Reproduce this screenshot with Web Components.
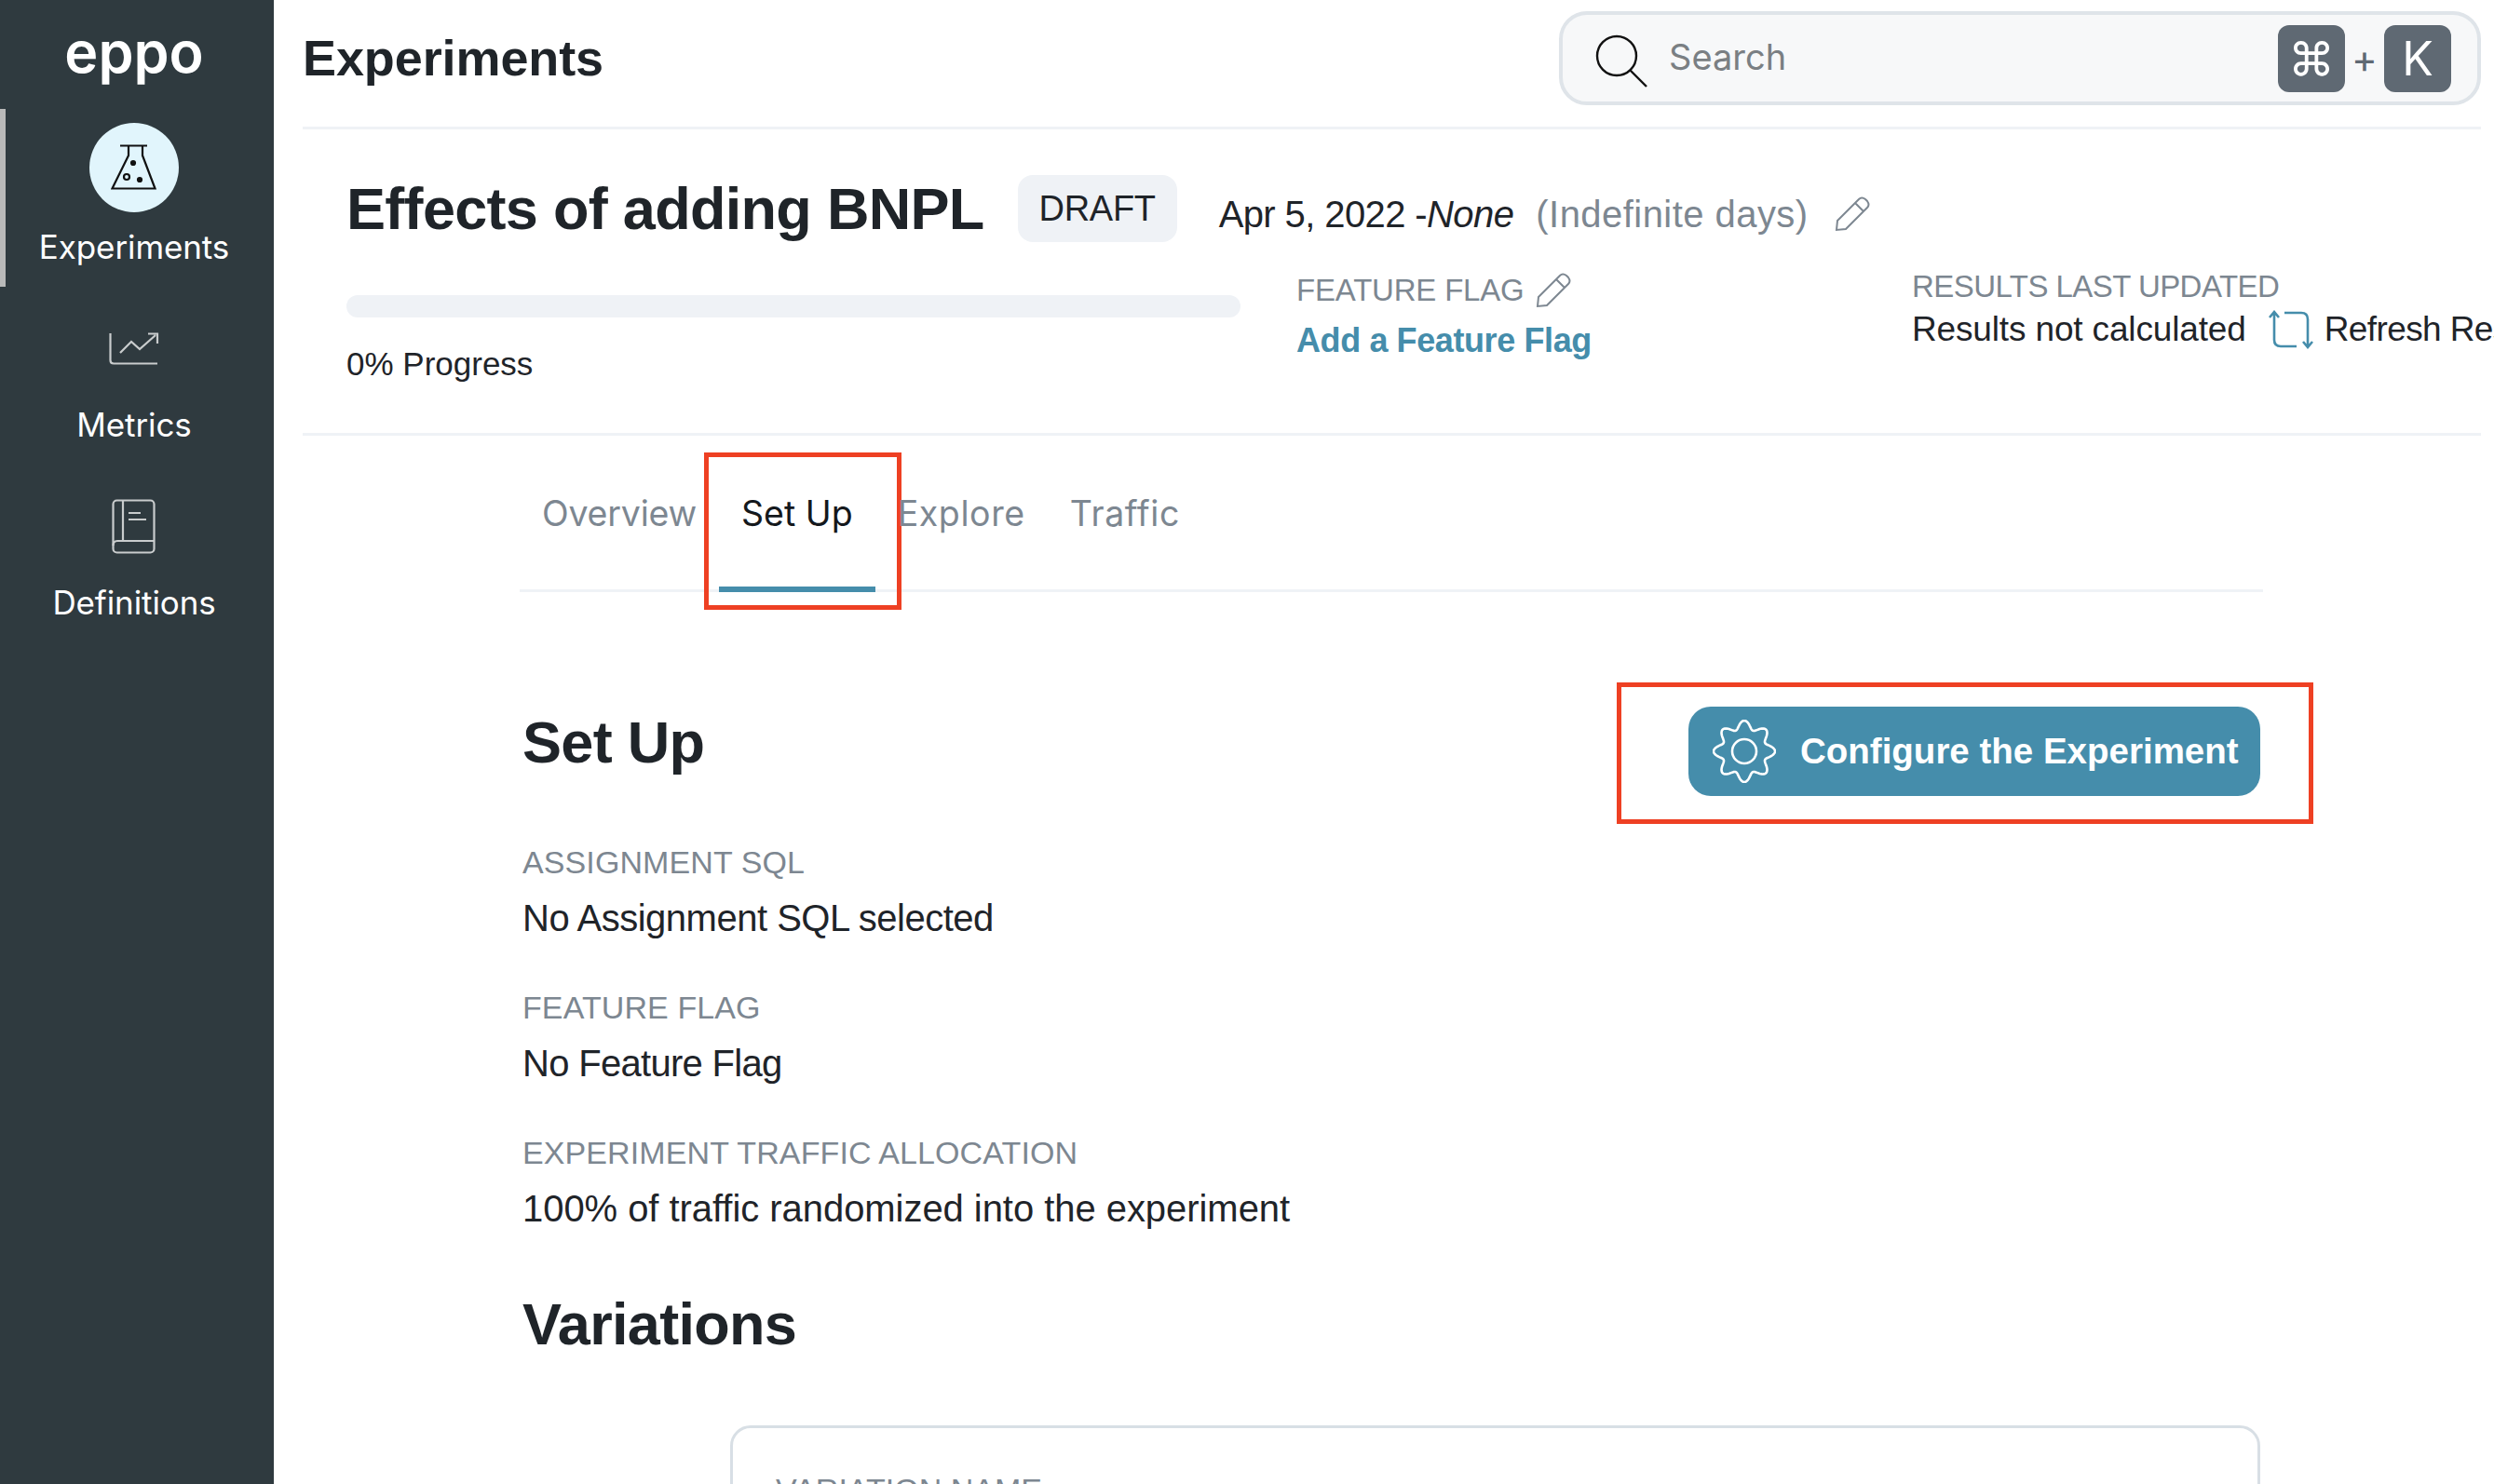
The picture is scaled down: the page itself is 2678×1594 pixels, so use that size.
<!DOCTYPE html>
<html lang="en">
<head>
<meta charset="utf-8">
<title>Experiments</title>
<style>
  html, body { margin: 0; height: 1594px; overflow: hidden; background: #fff; }
  body { font-family: "Liberation Sans", Arial, sans-serif; color: #1f2429; }
</style>
</head>
<body>
<app-shell>
  <side-bar slot="side">
    <nav-item active label="Experiments">
      <svg width="50" height="50" viewBox="0 0 50 50" fill="none" stroke="#111" stroke-width="2.2"><path d="M10 1.5H39M19 1.5V12L1.5 47.5H47.5L34 12V1.5"/><circle cx="24" cy="20" r="2" fill="#111"/><circle cx="17" cy="35" r="3"/><circle cx="31" cy="38" r="2" fill="#111"/></svg>
    </nav-item>
    <nav-item label="Metrics">
      <svg width="54" height="36" viewBox="0 0 54 36" fill="none" stroke="#c9cccd" stroke-width="2.2"><path d="M1.5 1V30Q1.5 33.5 5 33.5H52M12 22L24 10L33 18L50 3M42 1.5H52V12"/></svg>
    </nav-item>
    <nav-item label="Definitions">
      <svg width="48" height="60" viewBox="0 0 48 60" fill="none" stroke="#c9cccd" stroke-width="2.2"><rect x="1.5" y="1.5" width="44" height="56" rx="4"/><path d="M12 1.5V45M1.5 50Q1.5 45 6 45H45.5M18 15H31M18 22H37"/></svg>
    </nav-item>
  </side-bar>

  <top-bar>Experiments</top-bar>

  <experiment-header></experiment-header>

  <tab-bar>
    <tab-item style="letter-spacing:-0.2px">Overview</tab-item>
    <tab-item active>Set Up</tab-item>
    <tab-item style="letter-spacing:0.6px">Explore</tab-item>
    <tab-item style="letter-spacing:0.6px">Traffic</tab-item>
  </tab-bar>

  <setup-panel>
    <field-block label="ASSIGNMENT SQL" style="--val-spacing:-0.5px">No Assignment SQL selected</field-block>
    <field-block label="FEATURE FLAG" style="--val-spacing:-0.7px">No Feature Flag</field-block>
    <field-block label="EXPERIMENT TRAFFIC ALLOCATION">100% of traffic randomized into the experiment</field-block>
  </setup-panel>
</app-shell>

<script>
const PENCIL = `<svg width="38" height="38" viewBox="0 0 38 38" fill="none" stroke="#7d8791" stroke-width="2"><path d="M2 36L3 26L26 3Q29 0 33 3L35 5Q38 9 35 12L12 35ZM22 7L31 16"/></svg>`;

class AppShell extends HTMLElement {
  constructor() {
    super();
    this.attachShadow({ mode: 'open' });
    this.shadowRoot.innerHTML = `
      <style>
        :host { display: flex; width: 2678px; height: 1594px; overflow: hidden; }
        .main { flex: 1; min-width: 0; padding: 0 14px 0 31px; }
      </style>
      <slot name="side"></slot>
      <div class="main"><slot></slot></div>
    `;
  }
}

class SideBar extends HTMLElement {
  constructor() {
    super();
    this.attachShadow({ mode: 'open' });
    this.shadowRoot.innerHTML = `
      <style>
        :host { display: block; width: 294px; flex: none; background: #2f3a3f; color: #fff; }
        .logo { height: 117px; padding-right: 6px; text-align: center; font: 600 61px/112px Inter, sans-serif; }
      </style>
      <div class="logo">eppo</div>
      <slot></slot>
    `;
  }
}

class NavItem extends HTMLElement {
  constructor() {
    super();
    this.attachShadow({ mode: 'open' });
    const label = this.getAttribute('label') || '';
    this.shadowRoot.innerHTML = `
      <style>
        :host { display: block; height: 191px; box-sizing: border-box; border-left: 6px solid transparent; }
        :host([active]) { border-left-color: #b9b9b9; }
        .box { display: flex; flex-direction: column; align-items: center; margin-left: -12px; padding-top: 15px; }
        .icon { width: 96px; height: 96px; box-sizing: border-box; padding-top: 8px; border-radius: 50%; display: flex; align-items: center; justify-content: center; }
        :host([active]) .icon { background: #e1f5fc; padding-top: 0; }
        .label { font: 400 35px/46px Inter, sans-serif; letter-spacing: -0.1px; color: #fff; margin-top: 14px; white-space: nowrap; }
      </style>
      <div class="box">
        <div class="icon"><slot></slot></div>
        <div class="label">${label}</div>
      </div>
    `;
  }
}

class TopBar extends HTMLElement {
  constructor() {
    super();
    this.attachShadow({ mode: 'open' });
    this.shadowRoot.innerHTML = `
      <style>
        :host { display: flex; justify-content: space-between; height: 136px; box-sizing: content-box; border-bottom: 3px solid #eff2f6; }
        h1 { margin: 0; font: 700 54px/124px "Liberation Sans", sans-serif; letter-spacing: -0.1px; color: #1f2429; }
        .search { margin-top: 12px; width: 990px; height: 101px; box-sizing: border-box; border: 4px solid #dfe4e9; border-radius: 30px; background: #f7f8f9; display: flex; align-items: center; padding: 0 28px 0 35px; }
        .search .ph { margin: -3px 0 0 21px; flex: 1; font: 400 38px/48px Inter, sans-serif; color: #7a7f83; }
        .key { width: 72px; height: 72px; border-radius: 12px; background: #5f6973; color: #fff; display: flex; align-items: center; justify-content: center; font: 400 50px/72px Inter, sans-serif; }
        .plus { width: 42px; text-align: center; font: 400 42px/72px Inter, sans-serif; color: #5f6973; }
      </style>
      <h1><slot></slot></h1>
      <div class="search">
        <svg width="58" height="58" viewBox="0 0 58 58" fill="none" stroke="#111" stroke-width="2.4" style="margin-top:6px"><circle cx="23" cy="23" r="21"/><path d="M37 38L55 56"/></svg>
        <span class="ph">Search</span>
        <span class="key">⌘</span><span class="plus">+</span><span class="key">K</span>
      </div>
    `;
  }
}

class ExperimentHeader extends HTMLElement {
  constructor() {
    super();
    this.attachShadow({ mode: 'open' });
    this.shadowRoot.innerHTML = `
      <style>
        :host { display: block; height: 326px; box-sizing: content-box; border-bottom: 3px solid #eff2f6; padding-left: 47px; }
        .row1 { display: flex; align-items: center; padding-top: 49px; height: 72px; }
        h2 { margin: 0; font: 700 63px/72px "Liberation Sans", sans-serif; letter-spacing: -0.7px; white-space: nowrap; }
        .pill { margin-left: 36px; width: 171px; height: 72px; border-radius: 16px; background: #eff2f6; text-align: center; font: 400 38px/72px "Liberation Sans", sans-serif; letter-spacing: -0.3px; }
        .date { margin: 12px 0 0 45px; font: 400 40px/48px "Liberation Sans", sans-serif; letter-spacing: -0.6px; white-space: nowrap; display: flex; align-items: center; }
        .date .muted { color: #7d8791; margin-left: 24px; letter-spacing: 0.45px; }
        .date svg { margin-left: 28px; }
        .row2 { display: flex; }
        .progress { flex: none; width: 960px; margin-right: 60px; padding-top: 57px; }
        .track { height: 24px; border-radius: 12px; background: #eff2f6; }
        .pct { margin-top: 28px; font: 400 35px/44px "Liberation Sans", sans-serif; }
        .flag { flex: none; width: 661px; padding-top: 30px; }
        .cap { font: 400 33px/44px "Liberation Sans", sans-serif; letter-spacing: -0.2px; color: #7d8791; display: flex; align-items: center; gap: 12px; white-space: nowrap; }
        .results .cap { letter-spacing: -0.55px; }
        .link { font: 700 36px/48px "Liberation Sans", sans-serif; letter-spacing: -0.4px; color: #458dab; margin-top: 8px; white-space: nowrap; }
        .results { flex: none; padding-top: 26px; }
        .line { display: flex; align-items: center; font: 400 37px/48px "Liberation Sans", sans-serif; letter-spacing: -0.15px; white-space: nowrap; }
        .line svg { margin: 0 12px 0 24px; }
        .line span { letter-spacing: -0.6px; }
      </style>
      <div class="row1">
        <h2>Effects of adding BNPL</h2>
        <div class="pill">DRAFT</div>
        <div class="date">Apr 5, 2022 -<i>None</i><span class="muted">(Indefinite days)</span>${PENCIL}</div>
      </div>
      <div class="row2">
        <div class="progress">
          <div class="track"></div>
          <div class="pct">0% Progress</div>
        </div>
        <div class="flag">
          <div class="cap">FEATURE FLAG ${PENCIL}</div>
          <div class="link">Add a Feature Flag</div>
        </div>
        <div class="results">
          <div class="cap">RESULTS LAST UPDATED</div>
          <div class="line">Results not calculated
            <svg width="48" height="42" viewBox="0 0 48 42" fill="none" stroke="#458dab" stroke-width="2.6"><path d="M6 2V32Q6 39 13 39H30M1 8L6 2L11 8M17 3H35Q42 3 42 10V40M37 34L42 40L47 34"/></svg>
            <span>Refresh Results</span></div>
        </div>
      </div>
    `;
  }
}

class TabBar extends HTMLElement {
  constructor() {
    super();
    this.attachShadow({ mode: 'open' });
    this.shadowRoot.innerHTML = `
      <style>
        :host { display: flex; width: 1872px; margin-left: 233px; border-bottom: 3px solid #eff2f6; height: 165px; }
      </style>
      <slot></slot>
    `;
  }
}

class TabItem extends HTMLElement {
  constructor() {
    super();
    this.attachShadow({ mode: 'open' });
    this.shadowRoot.innerHTML = `
      <style>
        :host { display: block; position: relative; height: 168px; box-sizing: border-box; padding: 60px 24px 0; border-bottom: 6px solid transparent; font: 400 37.5px/48px Inter, sans-serif; color: #7d8791; white-space: nowrap; }
        :host([active]) { color: #14181c; border-bottom-color: #458dab; }
        .mark { display: none; position: absolute; left: -16px; right: -28px; top: 18px; bottom: -25px; border: 5px solid #ee4023; }
        :host([active]) .mark { display: block; }
      </style>
      <slot></slot><div class="mark"></div>
    `;
  }
}

class FieldBlock extends HTMLElement {
  constructor() {
    super();
    this.attachShadow({ mode: 'open' });
    this.shadowRoot.innerHTML = `
      <style>
        :host { display: block; margin-bottom: 50px; }
        .cap { font: 400 34px/44px "Liberation Sans", sans-serif; letter-spacing: 0.1px; color: #7d8791; }
        .val { margin-top: 14px; font: 400 40px/48px "Liberation Sans", sans-serif; letter-spacing: var(--val-spacing, -0.05px); color: #1f2429; }
      </style>
      <div class="cap">${this.getAttribute('label') || ''}</div>
      <div class="val"><slot></slot></div>
    `;
  }
}

class SetupPanel extends HTMLElement {
  constructor() {
    super();
    this.attachShadow({ mode: 'open' });
    // wavy outline of the gear, 8 lobes
    let pts = [];
    for (let i = 0; i < 240; i++) {
      const a = i / 240 * Math.PI * 2 - Math.PI / 2;
      const r = 28.5 + 4.5 * Math.cos(8 * (a + Math.PI / 2));
      pts.push((34 + r * Math.cos(a)).toFixed(1) + ',' + (34 + r * Math.sin(a)).toFixed(1));
    }
    this.shadowRoot.innerHTML = `
      <style>
        :host { display: block; width: 1923px; margin-left: 236px; }
        .head { display: flex; justify-content: space-between; padding-top: 97px; }
        h3 { margin: 64px 0 0; font: 700 63px/72px "Liberation Sans", sans-serif; letter-spacing: -0.7px; color: #1f2429; }
        .head h3 { margin-top: 28px; }
        .mark { width: 748px; height: 152px; box-sizing: border-box; border: 5px solid #ee4023; padding: 0 52px 4px 0; display: flex; align-items: center; justify-content: flex-end; }
        .btn { width: 614px; height: 96px; box-sizing: border-box; border-radius: 24px; background: #458dab; color: #fff; display: flex; align-items: center; gap: 26px; padding-left: 26px; font: 700 38.5px/48px "Liberation Sans", sans-serif; white-space: nowrap; }
        .fields { margin-top: 19px; }
        .card { margin: 73px 0 0 223px; width: 1643px; height: 200px; box-sizing: border-box; border: 3px solid #d8dfe5; border-radius: 22px; padding: 44px 46px; }
        .card div { font: 400 34px/44px "Liberation Sans", sans-serif; color: #7d8791; }
      </style>
      <div class="head">
        <h3>Set Up</h3>
        <div class="mark">
          <div class="btn">
            <svg width="68" height="68" viewBox="0 0 68 68" fill="none" stroke="#fff" stroke-width="2.6"><polygon points="${pts.join(' ')}"/><circle cx="34" cy="34" r="13"/></svg>
            Configure the Experiment
          </div>
        </div>
      </div>
      <div class="fields"><slot></slot></div>
      <h3>Variations</h3>
      <div class="card"><div>VARIATION NAME</div></div>
    `;
  }
}

customElements.define('app-shell', AppShell);
customElements.define('side-bar', SideBar);
customElements.define('nav-item', NavItem);
customElements.define('top-bar', TopBar);
customElements.define('experiment-header', ExperimentHeader);
customElements.define('tab-bar', TabBar);
customElements.define('tab-item', TabItem);
customElements.define('field-block', FieldBlock);
customElements.define('setup-panel', SetupPanel);
</script>
</body>
</html>
